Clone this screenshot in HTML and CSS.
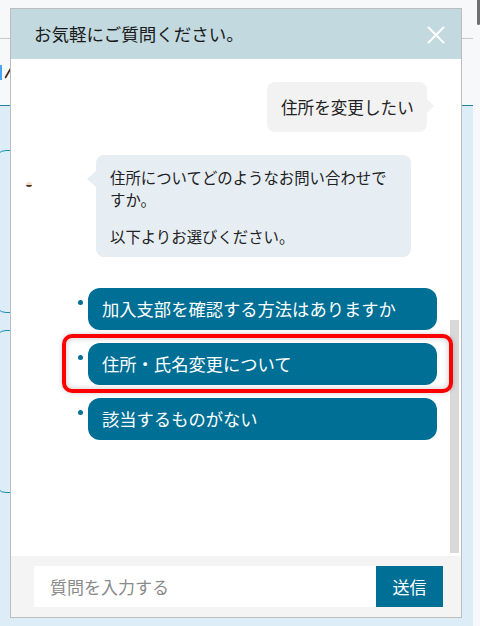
FILE: index.html
```html
<!DOCTYPE html>
<html lang="ja">

<head>
    <meta charset="UTF-8">
    <meta name="viewport" content="width=device-width, initial-scale=1.0">
    <title>お問い合わせ</title>
    <link rel="stylesheet" href="styles.css">
</head>

<body>
    <div class="site">
        <header class="site-head">
            <div class="site-head-rule"></div>
            <div class="site-tool">
                <span class="tool-mark"></span>
                <svg class="tool-pen" width="8" height="12" viewBox="0 0 8 12">
                    <path d="M7 1 L1.5 10.5" stroke="#3a2a1a" stroke-width="1.6" stroke-linecap="round" />
                </svg>
            </div>
        </header>
        <main class="site-main">
            <div class="site-card"></div>
            <div class="site-card second"></div>
        </main>
    </div>
    <div class="page-scroll">
        <div class="page-scroll-thumb"></div>
    </div>

    <!-- チャットウィンドウ -->
    <div class="chat">
        <div class="chat-head">
            <span class="chat-title">お気軽にご質問ください。</span>
            <button class="chat-close" aria-label="閉じる">
                <svg width="18" height="18" viewBox="0 0 18 18">
                    <path d="M1 1 L17 17 M17 1 L1 17" stroke="#fff" stroke-width="2" />
                </svg>
            </button>
        </div>
        <div class="chat-body">
            <div class="msg-user">
                <div class="bubble-user">住所を変更したい</div>
            </div>
            <div class="msg-bot">
                <div class="bot-avatar"><span class="bot-dot"></span></div>
                <div class="bubble-bot">
                    <p>住所についてどのようなお問い合わせですか。</p>
                    <p>以下よりお選びください。</p>
                </div>
            </div>
            <ul class="options">
                <li><button class="option">加入支部を確認する方法はありますか</button></li>
                <li class="picked"><button class="option">住所・氏名変更について</button></li>
                <li><button class="option">該当するものがない</button></li>
            </ul>
            <div class="chat-scroll"></div>
        </div>
        <div class="chat-foot">
            <input class="chat-input" type="text" placeholder="質問を入力する">
            <button class="chat-send">送信</button>
        </div>
    </div>
</body>

</html>
```

FILE: styles.css
```css
* {
    box-sizing: border-box;
}

body {
    margin: 0;
    height: 626px;
    overflow: hidden;
    display: flex;
    background: #f7f8fa;
    font-family: "Noto Sans CJK JP", "Noto Sans", sans-serif;
    color: #222;
}

/* 背景のページ */
.site {
    flex: 1;
    display: flex;
    flex-direction: column;
}

.site-head {
    height: 106px;
    background: #f7f8fa;
    border-bottom: 1px solid #1b86a6;
}

.site-head-rule {
    margin-top: 38px;
    height: 1px;
    background: #c9c9c9;
}

.site-tool {
    margin-top: 26px;
    display: flex;
    align-items: flex-start;
    gap: 2px;
}

.tool-mark {
    width: 2px;
    height: 15px;
    background: #4aa6f5;
}

.tool-pen {
    margin-top: 2px;
}

.site-main {
    flex: 1;
    background: #dcedf8;
    padding-top: 44px;
}

.site-card {
    width: 300px;
    height: 163px;
    margin-left: -6px;
    border: 1px solid #1a8fb5;
    border-radius: 12px;
}

.site-card.second {
    margin-top: 17px;
}

.page-scroll {
    width: 7px;
    background: #f7f8fa;
    display: flex;
    justify-content: flex-end;
}

.page-scroll-thumb {
    width: 3px;
    height: 25px;
    background: #6f6f6f;
    border-radius: 0 0 2px 2px;
}

/* チャット */
.chat {
    position: fixed;
    left: 10px;
    top: 8px;
    width: 452px;
    height: 610px;
    border: 1px solid #bdbdbd;
    background: #fff;
    display: flex;
    flex-direction: column;
    z-index: 10;
}

.chat-head {
    height: 50px;
    flex: none;
    background: #c1d9df;
    display: flex;
    align-items: center;
    justify-content: space-between;
    padding: 0 16px 0 23px;
}

.chat-title {
    font-size: 17.5px;
    line-height: 24px;
    color: #1a1a1a;
}

.chat-close {
    border: none;
    background: none;
    padding: 0;
    width: 18px;
    height: 18px;
    margin-top: 2px;
    cursor: pointer;
}

.chat-body {
    position: relative;
    flex: 1;
    padding-top: 23px;
}

.msg-user {
    display: flex;
    justify-content: flex-end;
    padding-right: 34px;
}

.bubble-user {
    position: relative;
    width: 160px;
    padding: 14px 12px 14px 14px;
    font-size: 16.6px;
    line-height: 22px;
    background: #f2f2f2;
    border-radius: 8px;
    white-space: nowrap;
}

.bubble-user::after {
    content: "";
    position: absolute;
    right: -7px;
    top: 17px;
    border-left: 7px solid #f2f2f2;
    border-top: 7px solid transparent;
    border-bottom: 7px solid transparent;
}

.msg-bot {
    display: flex;
    align-items: flex-start;
    margin-top: 23px;
}

.bot-avatar {
    width: 85px;
    padding: 27px 0 0 15px;
}

.bot-dot {
    display: block;
    width: 6px;
    height: 5px;
    border-radius: 50%;
    background: linear-gradient(#f1dfc4 55%, #4a3522 55%);
}

.bubble-bot {
    position: relative;
    width: 315px;
    padding: 11px 14px 10px;
    background: #e6eef4;
    border-radius: 8px;
    font-size: 15.4px;
    line-height: 22.3px;
}

.bubble-bot::before {
    content: "";
    position: absolute;
    left: -9px;
    top: 16px;
    border-right: 9px solid #e6eef4;
    border-top: 8px solid transparent;
    border-bottom: 8px solid transparent;
}

.bubble-bot p {
    margin: 0;
}

.bubble-bot p + p {
    margin-top: 14px;
}

.options {
    list-style: none;
    margin: 31px 24px 0 0;
    padding: 0 0 0 67px;
    display: flex;
    flex-direction: column;
    gap: 13px;
}

.options li {
    position: relative;
    display: flex;
    align-items: flex-start;
}

.options li::before {
    content: "";
    flex: none;
    width: 5px;
    height: 5px;
    margin: 12px 5px 0 0;
    border-radius: 50%;
    background: #006f95;
}

.option {
    flex: 1;
    height: 42px;
    border: none;
    border-radius: 12px;
    background: #006f95;
    color: #fff;
    font-family: inherit;
    font-size: 17.3px;
    text-align: left;
    padding: 0 14px;
    cursor: pointer;
}

/* 赤枠の強調 */
.options li.picked::after {
    content: "";
    position: absolute;
    z-index: 2;
    left: -16px;
    right: -16px;
    top: -9px;
    bottom: -8px;
    border: 4.5px solid #ff0000;
    border-radius: 10px;
    box-shadow: 0 0 5px rgba(0, 0, 0, 0.2), inset 0 0 6px rgba(0, 0, 0, 0.22);
    pointer-events: none;
}

.chat-scroll {
    position: absolute;
    z-index: 1;
    right: 2px;
    top: 261px;
    bottom: 3px;
    width: 9px;
    background: #d9d9d9;
}

.chat-foot {
    height: 61px;
    flex: none;
    background: #f4f4f4;
    display: flex;
    align-items: center;
    padding: 0 18px 0 23px;
}

.chat-input {
    flex: 1;
    height: 41px;
    border: none;
    outline: none;
    padding: 0 16px;
    font-family: inherit;
    font-size: 17px;
    background: #fff;
}

.chat-input::placeholder {
    color: #8a8a8a;
}

.chat-send {
    width: 67px;
    height: 41px;
    border: none;
    background: #006f95;
    color: #fff;
    font-family: inherit;
    font-size: 17px;
    cursor: pointer;
}
```
